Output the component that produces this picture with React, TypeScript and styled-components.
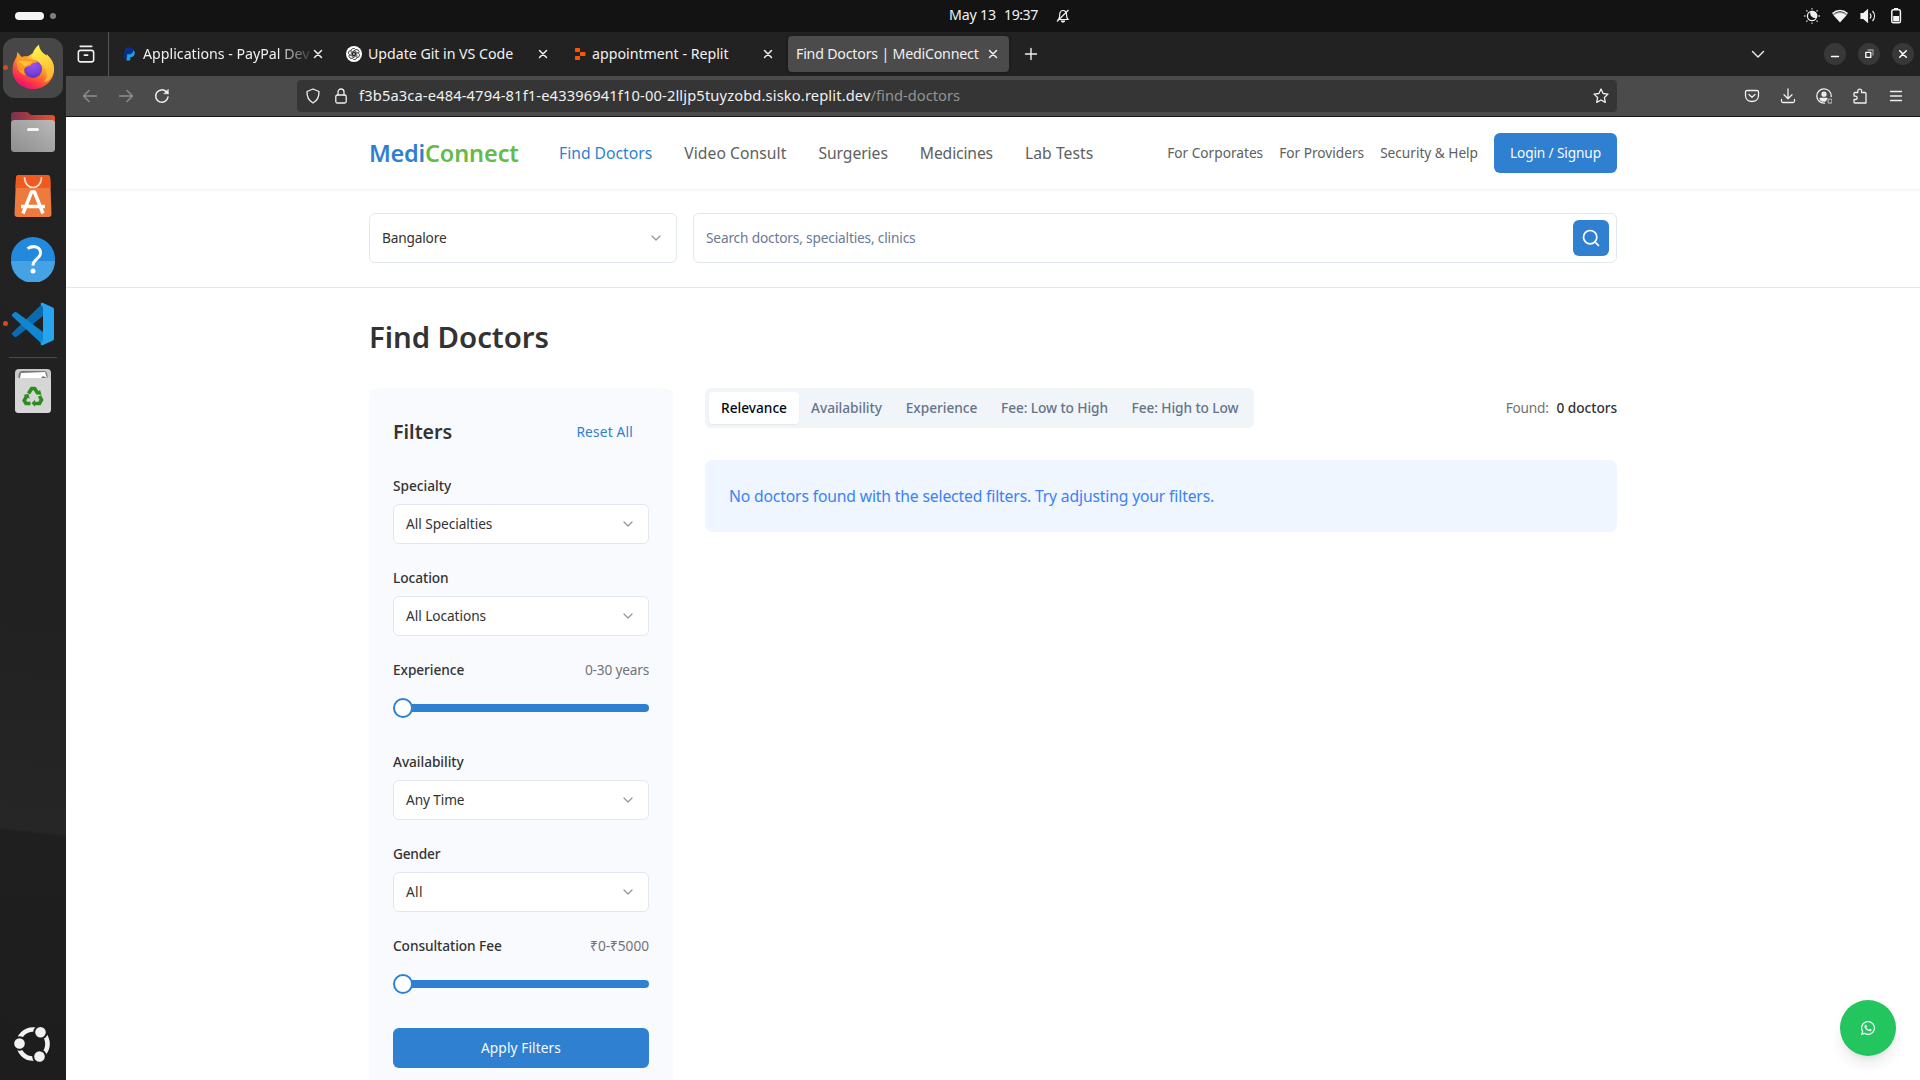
import React from 'react';
import styled, { createGlobalStyle } from 'styled-components';

const GlobalStyle = createGlobalStyle`
  * { box-sizing: border-box; }
  html, body { margin: 0; padding: 0; background: #fff; overflow: hidden; }
  body { font-family: "Noto Sans", "Open Sans", sans-serif; }
  button { font-family: inherit; border: 0; padding: 0; background: none; }
  svg { display: block; flex-shrink: 0; }
`;

/* ---------- text ---------- */

const Text = styled.span<{ $size?: number; $weight?: number; $ls?: number; $color?: string }>`
  font-size: ${p => p.$size ?? 13.7}px;
  font-weight: ${p => p.$weight ?? 400};
  letter-spacing: ${p => p.$ls ?? 0}px;
  color: ${p => p.$color ?? 'inherit'};
  line-height: 20px;
  white-space: pre;
`;

/* ---------- desktop shell ---------- */

const Desktop = styled.div`
  width: 1920px;
  height: 1080px;
  display: flex;
  flex-direction: column;
  overflow: hidden;
`;

const SystemBar = styled.header`
  height: 32px;
  flex-shrink: 0;
  display: grid;
  grid-template-columns: 949px 1fr auto;
  align-items: center;
  background: #131313;
  color: #f2f2f2;
`;

const Workspaces = styled.div`
  display: flex;
  align-items: center;
  gap: 6px;
  padding-left: 15px;
`;

const WorkspacePill = styled.i`
  width: 29px;
  height: 8px;
  border-radius: 4px;
  background: #f4f4f4;
`;

const WorkspaceDot = styled.i`
  width: 6px;
  height: 6px;
  border-radius: 50%;
  background: #808080;
`;

const Clock = styled.div`
  display: flex;
  align-items: center;
  padding-bottom: 4px;
`;

const ClockDay = styled.div`
  width: 55px;
`;

const ClockTime = styled.div`
  width: 52px;
`;

const BellBox = styled.div`
  padding-top: 4px;
`;

const SystemIcons = styled.div`
  display: flex;
  gap: 10px;
  padding-right: 15px;
`;

const Workspace = styled.div`
  flex: 1;
  display: flex;
  min-height: 0;
`;

const Dock = styled.nav`
  width: 66px;
  flex-shrink: 0;
  display: flex;
  flex-direction: column;
  align-items: center;
  padding-bottom: 16px;
  background: linear-gradient(187deg, #222 0%, #212121 55%, #262626 76%, #1f1f1f 76.3%, #1d1d1d 100%);
`;

const DockItem = styled.div<{ $active?: boolean; $lift?: boolean }>`
  position: relative;
  width: 60px;
  height: 60px;
  margin-top: ${p => (p.$active ? 6 : 4)}px;
  padding-bottom: ${p => (p.$lift ? 2 : 0)}px;
  display: flex;
  align-items: center;
  justify-content: center;
  border-radius: 12px;
  background: ${p => (p.$active ? '#474747' : 'transparent')};
`;

const RunningDot = styled.i`
  position: absolute;
  left: 0;
  top: 27px;
  width: 5px;
  height: 5px;
  border-radius: 50%;
  background: #d84b16;
`;

const DockDivider = styled.hr`
  width: 48px;
  height: 1px;
  border: 0;
  margin: 3px 0 0;
  background: #4c4c4c;
`;

const DockSpacer = styled.div`
  flex: 1;
`;

/* ---------- browser chrome ---------- */

const Browser = styled.div`
  flex: 1;
  display: flex;
  flex-direction: column;
  min-width: 0;
`;

const TabBar = styled.div`
  height: 44px;
  flex-shrink: 0;
  display: flex;
  align-items: center;
  background: #222;
  color: #f0f0f0;
`;

const TabOverview = styled.div`
  width: 43px;
  height: 44px;
  display: flex;
  align-items: center;
  padding-left: 11px;
  border-right: 1px solid #565656;
`;

const TabItem = styled.div<{ $width: number; $start: number; $end: number; $active?: boolean }>`
  width: ${p => p.$width}px;
  height: 36px;
  display: flex;
  align-items: center;
  justify-content: space-between;
  padding-left: ${p => p.$start}px;
  padding-right: ${p => p.$end}px;
  border-radius: 4px;
  background: ${p => (p.$active ? '#4b4b4b' : 'transparent')};
  box-shadow: ${p => (p.$active ? '0 0 3px rgba(0,0,0,.5)' : 'none')};
`;

const TabLabel = styled.div<{ $fade?: boolean }>`
  flex: 1;
  display: flex;
  align-items: center;
  gap: ${p => (p.$fade ? 8 : 6)}px;
  min-width: 0;
  overflow: hidden;
  mask-image: ${p => (p.$fade ? 'linear-gradient(to right, #000 155px, transparent 192px)' : 'none')};
`;

const NewTab = styled.div`
  width: 42px;
  display: flex;
  justify-content: center;
  padding-left: 1px;
`;

const TabBarEnd = styled.div`
  margin-left: auto;
  display: flex;
  align-items: center;
  gap: 12px;
  padding-right: 6px;
`;

const TabListChevron = styled.div`
  margin-right: 46px;
`;

const WindowButton = styled.button`
  width: 22px;
  height: 22px;
  display: flex;
  align-items: center;
  justify-content: center;
  border-radius: 50%;
  background: #383838;
`;

const Toolbar = styled.div`
  height: 41px;
  flex-shrink: 0;
  display: flex;
  align-items: center;
  background: #4b4b4b;
  border-bottom: 1px solid #161616;
  color: #f0f0f0;
`;

const NavButtons = styled.div`
  width: 231px;
  display: flex;
  gap: 20px;
  padding-left: 16px;
`;

const AddressBar = styled.div`
  width: 1320px;
  height: 32px;
  display: flex;
  align-items: center;
  padding: 0 8px;
  border-radius: 4px;
  background: #353535;
`;

const AddressIcons = styled.div`
  width: 54px;
  display: flex;
  gap: 12px;
`;

const AddressText = styled.div`
  display: flex;
  padding-bottom: 2px;
`;

const StarBox = styled.div`
  margin-left: auto;
`;

const ToolbarIcons = styled.div`
  margin-left: auto;
  display: flex;
  gap: 20px;
  padding-right: 16px;
`;

/* ---------- web page ---------- */

const Page = styled.main`
  flex: 1;
  min-height: 0;
  display: flex;
  flex-direction: column;
  background: #fff;
  color: #333;
`;

const SiteHeader = styled.div`
  height: 73px;
  flex-shrink: 0;
  border-bottom: 1px solid #f3f4f6;
  box-shadow: 0 1px 2px rgba(0, 0, 0, 0.03);
`;

const Container = styled.div`
  width: 1248px;
  height: 100%;
  margin: 0 auto;
  display: flex;
  align-items: center;
`;

const Logo = styled.div`
  width: 190px;
  display: flex;
  align-items: center;
`;

const MainNav = styled.nav`
  display: flex;
  gap: 32px;
`;

const AccountNav = styled.nav`
  margin-left: auto;
  display: flex;
  align-items: center;
  gap: 16px;
`;

const PrimaryButton = styled.button<{ $wide?: boolean }>`
  width: ${p => (p.$wide ? '100%' : '123px')};
  height: 40px;
  display: flex;
  align-items: center;
  justify-content: center;
  border-radius: 6px;
  background: #2f80d1;
  color: #f8fafc;
`;

const SearchBand = styled.section`
  height: 98px;
  flex-shrink: 0;
  border-bottom: 1px solid #e5e7eb;
`;

const SearchRow = styled(Container)`
  gap: 16px;
  padding-bottom: 1px;
`;

const Select = styled.div<{ $width?: number; $height: number }>`
  width: ${p => (p.$width ? `${p.$width}px` : '100%')};
  height: ${p => p.$height}px;
  display: flex;
  align-items: center;
  justify-content: space-between;
  padding: 0 12px;
  border: 1px solid #e2e8f0;
  border-radius: 6px;
  background: #fff;
  color: #333;
`;

const SearchInput = styled.div`
  flex: 1;
  height: 50px;
  display: flex;
  align-items: center;
  justify-content: space-between;
  padding: 0 7px 0 12px;
  border: 1px solid #e2e8f0;
  border-radius: 6px;
`;

const SearchButton = styled.button`
  width: 36px;
  height: 36px;
  display: flex;
  align-items: center;
  justify-content: center;
  border-radius: 6px;
  background: #2f80d1;
`;

const Content = styled.section`
  width: 1248px;
  margin: 0 auto;
  flex: 1;
  min-height: 0;
  display: flex;
  flex-direction: column;
`;

const Title = styled.h1`
  margin: 31px 0 33px;
  height: 36px;
  line-height: 36px;
  font-size: 29.4px;
  font-weight: 600;
  letter-spacing: -0.06px;
`;

const Columns = styled.div`
  flex: 1;
  min-height: 0;
  display: grid;
  grid-template-columns: 304px 1fr;
  gap: 32px;
`;

const FilterCard = styled.aside`
  display: flex;
  flex-direction: column;
  padding: 24px;
  border-radius: 8px 8px 0 0;
  background: #f8fafe;
`;

const FilterHead = styled.div`
  height: 40px;
  margin-bottom: 24px;
  display: flex;
  align-items: center;
  justify-content: space-between;
  padding-right: 16px;
`;

const Field = styled.div`
  height: 92px;
  display: flex;
  flex-direction: column;
  gap: 8px;
`;

const FieldHead = styled.div`
  height: 20px;
  display: flex;
  align-items: center;
  justify-content: space-between;
`;

const Slider = styled.div`
  height: 40px;
  display: flex;
  align-items: center;
`;

const SliderThumb = styled.i`
  width: 20px;
  height: 20px;
  flex-shrink: 0;
  border: 2px solid #2f80d1;
  border-radius: 50%;
  background: #fff;
`;

const SliderTrack = styled.i`
  flex: 1;
  height: 8px;
  margin-left: -1px;
  border-radius: 0 4px 4px 0;
  background: #2f80d1;
`;

const Results = styled.div`
  display: flex;
  flex-direction: column;
  gap: 32px;
`;

const ResultsHead = styled.div`
  height: 40px;
  display: flex;
  align-items: center;
  justify-content: space-between;
`;

const SortTabs = styled.div`
  height: 40px;
  display: flex;
  padding: 4px;
  border-radius: 6px;
  background: #f1f4f9;
`;

const SortTab = styled.button<{ $width: number; $active?: boolean }>`
  width: ${p => p.$width}px;
  height: 32px;
  display: flex;
  align-items: center;
  justify-content: center;
  border-radius: 4px;
  color: ${p => (p.$active ? '#020817' : '#64748b')};
  background: ${p => (p.$active ? '#fff' : 'transparent')};
  box-shadow: ${p => (p.$active ? '0 1px 2px rgba(0,0,0,.06)' : 'none')};
`;

const ResultCount = styled.div`
  display: flex;
  gap: 8px;
`;

const Notice = styled.div`
  height: 72px;
  display: flex;
  align-items: center;
  padding: 0 24px;
  border-radius: 8px;
  background: #eff6ff;
  color: #3b82f6;
`;

const ChatButton = styled.button`
  position: fixed;
  left: 1840px;
  top: 1000px;
  width: 56px;
  height: 56px;
  display: flex;
  align-items: center;
  justify-content: center;
  border-radius: 50%;
  background: #22c55e;
  box-shadow: 0 10px 15px -3px rgba(0, 0, 0, 0.1), 0 4px 6px -4px rgba(0, 0, 0, 0.1);
`;

/* ---------- icons ---------- */

type IconProps = { size?: number; sw?: number; color?: string; children: React.ReactNode };

const Icon = ({ size = 16, sw = 1.3, color = 'currentColor', children }: IconProps) => (
  <svg width={size} height={size} viewBox="0 0 16 16" fill="none" stroke={color} strokeWidth={sw} strokeLinecap="round" strokeLinejoin="round">
    {children}
  </svg>
);

const CloseIcon = () => <Icon sw={1.5}><path d="M4.500 4.500l7 7M11.500 4.500l-7 7" /></Icon>;

const ChevronDown = () => (
  <svg width="16" height="16" viewBox="0 0 24 24" fill="none" stroke="#999" strokeWidth="2" strokeLinecap="round" strokeLinejoin="round">
    <path d="m6 9 6 6 6-6" />
  </svg>
);

const FirefoxIcon = () => (
  <svg width="44" height="46" viewBox="0 0 44 46">
    <defs>
      <linearGradient id="ffBody" x1="0.8" y1="0.1" x2="0.25" y2="1">
        <stop offset="0" stopColor="#fff44f" />
        <stop offset="0.3" stopColor="#ffb52e" />
        <stop offset="0.55" stopColor="#ff6a33" />
        <stop offset="0.8" stopColor="#fb2c4f" />
        <stop offset="1" stopColor="#e2098a" />
      </linearGradient>
      <radialGradient id="ffGlobe" cx="0.5" cy="0.25" r="0.8">
        <stop offset="0" stopColor="#a04df5" />
        <stop offset="0.6" stopColor="#7a42dd" />
        <stop offset="1" stopColor="#4a3aa8" />
      </radialGradient>
      <linearGradient id="ffFlame" x1="0.5" y1="0" x2="0.7" y2="1">
        <stop offset="0" stopColor="#fff14e" />
        <stop offset="1" stopColor="#ffb02b" />
      </linearGradient>
    </defs>
    <path d="M1.500 26c0-6 2-10 4-13l1-5 4 5c2-1 4-1 6-.5L27 6l11 7c4 4 5 8 5 12.500C43 36 34 45 22.500 45S1.500 37 1.500 26z" fill="url(#ffBody)" />
    <path d="M20.500 15c.5-6 3-11 7.500-14.500 0 5 4 8 7 12 1-.8.900-1.500.7-2.500 8 8 9 17 4.300 23.500-2 3-5 4.500-7 4.500 4-5 3-11 1-14-2-4-7-6-13.500-9z" fill="url(#ffFlame)" />
    <circle cx="22" cy="25" r="9" fill="url(#ffGlobe)" />
    <path d="M7 9l3.500 4.500c3-.8 6 0 8 2 4-1 7 1 8 3-3 0-6 .5-7 3-2 1-5 1-6 3-1 3 0 5 1 7-5-2-8-5-8.500-10C5 17 6 12 7 9z" fill="#ff9a24" />
    <path d="M7 17.500c5-2 9 1 14 0-1 3-5 3-7 5-2-2-4-3-7-5z" fill="#ffc23a" />
  </svg>
);

const FilesIcon = () => (
  <svg width="46" height="42" viewBox="0 0 46 42">
    <defs>
      <linearGradient id="flBack" x1="0" x2="1"><stop offset="0" stopColor="#7a2f52" /><stop offset="1" stopColor="#e8532a" /></linearGradient>
      <linearGradient id="flFront" x1="0" y1="1" x2="1" y2="0"><stop offset="0" stopColor="#8e8e8e" /><stop offset="1" stopColor="#b9b9b9" /></linearGradient>
    </defs>
    <path d="M1 4c0-2 1-3 3-3h13c2 0 2 3 5 3h20c2 0 3 1 3 3v14H1z" fill="url(#flBack)" />
    <rect x="1" y="9" width="44" height="32" rx="3.500" fill="url(#flFront)" />
    <rect x="17" y="17" width="12" height="3" rx="1.500" fill="#f5f5f5" />
  </svg>
);

const SoftwareIcon = () => (
  <svg width="38" height="44" viewBox="0 0 38 44">
    <path d="M5 1h28c2 0 3 1 3.200 3L37.500 40c0 2-1 3-3 3h-31c-2 0-3-1-3-3L2 4c0-2 1-3 3-3z" fill="#ee7a3c" />
    <path d="M5 1h28c2 0 3 1 3.200 3l.5 10H1.500L2 4c0-2 1-3 3-3z" fill="#f05a20" />
    <path d="M10.500 3c0 14 17 14 17 0" fill="none" stroke="#fbe3d8" strokeWidth="1.600" />
    <path d="M9 39.500L17.500 18h3L29 39.500M7 32.500h24" fill="none" stroke="#fff" strokeWidth="3.500" strokeLinejoin="round" />
  </svg>
);

const HelpIcon = () => (
  <svg width="46" height="46" viewBox="0 0 46 46">
    <circle cx="23" cy="23" r="22" fill="#2389dc" />
    <path d="M1 25a22 22 0 0044 0z" fill="#45a2e4" />
    <path d="M17.500 12.500c7-4 13-1 13 4.500 0 6-7.500 6-7.500 12.500" fill="none" stroke="#fff" strokeWidth="3" />
    <circle cx="23" cy="35" r="2.500" fill="#fff" />
  </svg>
);

const CodeIcon = () => (
  <svg width="44" height="44" viewBox="0 0 44 44">
    <path d="M32 1v13L6 34.500c-1 .8-2 .7-2.500.2L1.500 33c-.8-.8-.8-1.800 0-2.500z" fill="#0a6bb0" />
    <path d="M32 43V30L6 10.500c-1-.8-2-.7-2.500-.2L1.500 12c-.8.8-.8 1.800 0 2.500z" fill="#1186d0" />
    <path d="M31.500.8L42 5.500c.7.4 1 1 1 1.800v29.400c0 .8-.3 1.400-1 1.800L31.500 43.200c-1 .3-2-.5-2-1.500l2.500-3.200V5.500L29.500 2.300c0-1 1-1.800 2-1.500z" fill="#27a4ee" />
  </svg>
);

const TrashIcon = () => (
  <svg width="38" height="46" viewBox="0 0 38 46">
    <rect x="1" y="1" width="36" height="44" rx="4" fill="#c9c9c9" />
    <rect x="1" y="9" width="36" height="36" rx="4" fill="#d6d6d6" />
    <path d="M4.500 10c0-5 1-7 4-7h21c3 0 4 2 4 7z" fill="#777" />
    <path d="M6 10l1-5 24-1 2 6-4-2-2 2z" fill="#fff" />
    <g fill="none" stroke="#2e8b1f" strokeWidth="3.600">
      <path d="M14.500 25.500l3.200-5h3l3 4.800" />
      <path d="M25.500 28l2 4-2 3.500h-5" />
      <path d="M16.500 35.500H12l-1.800-3 2.300-4.200" />
    </g>
    <path d="M22 26.500l5.500.3-1.500-5zM21 31.800v7l-3.500-3.500zM9.500 27l4.800-1.300 1.500 5z" fill="#2e8b1f" />
  </svg>
);

const UbuntuIcon = () => (
  <svg width="40" height="40" viewBox="0 0 40 40">
    <circle cx="20" cy="20" r="14.500" fill="none" stroke="#f2f2f2" strokeWidth="4.600" />
    <g fill="#f2f2f2" stroke="#1e1e1e" strokeWidth="2">
      <circle cx="6.500" cy="19.500" r="6.300" />
      <circle cx="27.500" cy="8.300" r="6.300" />
      <circle cx="26.500" cy="32.500" r="6.300" />
    </g>
  </svg>
);

const PayPalIcon = () => (
  <svg width="12" height="14" viewBox="0 0 12 14">
    <path d="M4 3h6c2 1 2 3 1.500 4.500C11 9.500 9.500 10 7.500 10L7 13.500H3.500z" fill="#1ea0e6" />
    <path d="M2.500.5h5C10 .5 10.800 2 10.300 4 9.800 6.500 8 7.300 5.500 7.300H4.300L3.500 11.500H.3z" fill="#0a2f8a" />
  </svg>
);

const ChatGptIcon = () => (
  <svg width="16" height="16" viewBox="0 0 16 16">
    <circle cx="8" cy="8" r="8" fill="#fff" />
    <g fill="none" stroke="#222" strokeWidth="0.800">
      <circle cx="8" cy="8" r="1.900" />
      {[0, 60, 120, 180, 240, 300].map(a => (
        <path key={a} transform={`rotate(${a} 8 8)`} d="M5.200 7.500V4.600a2.300 2.300 0 014.300-1.100M6 5.500l4 2.200" />
      ))}
    </g>
  </svg>
);

const ReplitIcon = () => (
  <svg width="12" height="14" viewBox="0 0 12 14" fill="#fd5402">
    <rect x="1" y="1" width="5" height="4" rx="0.700" />
    <rect x="6" y="5" width="5.500" height="4" rx="0.700" />
    <rect x="1" y="9" width="5" height="4" rx="0.700" />
  </svg>
);

const BellOffIcon = () => (
  <svg width="14" height="14" viewBox="0 0 14 14" fill="none" stroke="#f0f0f0" strokeWidth="1.200">
    <path d="M2.500 10.500h9.500c-1-1-1.500-2-1.500-5C10.500 3 9 1.500 7 1.500S3.800 3 3.700 5.500c0 2.500-.2 4-1.200 5z" />
    <path d="M1 12.500L12.500 1" />
    <path d="M5.500 12a1.600 1.600 0 003 0z" fill="#f0f0f0" />
  </svg>
);

const BrightnessIcon = () => (
  <svg width="18" height="18" viewBox="0 0 18 18" fill="none" stroke="#eee" strokeWidth="1.300">
    <circle cx="9" cy="9" r="4.600" />
    <path d="M8 4.500a4.600 4.600 0 015.500 5.800C10.500 11 7 9 8 4.500z" fill="#eee" />
    <path stroke="#bbb" d="M9 1v1.600M9 15.400V17M1 9h1.600M15.400 9H17M3.300 3.300l1.200 1.200M13.500 13.500l1.200 1.200M3.300 14.700l1.200-1.200M13.500 4.500l1.200-1.200" />
  </svg>
);

const WifiIcon = () => (
  <svg width="18" height="18" viewBox="0 0 18 18">
    <path d="M9 15.500L2 7.800c4-3.600 10-3.600 14 0z" fill="#f4f4f4" />
    <path d="M1.500 6.600C6 2.500 12 2.500 16.500 6.600" fill="none" stroke="#f4f4f4" strokeWidth="1.500" />
    <path d="M2.500 8.100c4-3.300 9-3.300 13 0" fill="none" stroke="#555" strokeWidth="0.600" />
  </svg>
);

const VolumeIcon = () => (
  <svg width="18" height="18" viewBox="0 0 18 18" fill="none" stroke="#eee" strokeWidth="1.200">
    <path d="M2 6.500h2.500L8.500 3v12l-4-3.500H2z" fill="#f4f4f4" />
    <path d="M11 6.500c1.200 1.500 1.200 3.500 0 5M13.500 4c2.700 3 2.700 7 0 10" />
  </svg>
);

const BatteryIcon = () => (
  <svg width="18" height="18" viewBox="0 0 18 18">
    <rect x="4.800" y="2.800" width="8.600" height="13" rx="1.600" fill="none" stroke="#f4f4f4" strokeWidth="1.500" />
    <rect x="7" y="1" width="4.200" height="2" fill="#f4f4f4" />
    <rect x="6.200" y="9" width="5.800" height="5.400" fill="#f4f4f4" />
  </svg>
);

const WhatsAppIcon = () => (
  <svg width="16" height="16" viewBox="0 0 448 512" fill="#fff">
    <path d="M380.900 97.100C339 55.100 283.200 32 223.900 32c-122.400 0-222 99.600-222 222 0 39.100 10.200 77.300 29.600 111L0 480l117.700-30.900c32.400 17.700 68.900 27 106.100 27h.1c122.300 0 224.100-99.600 224.100-222 0-59.300-25.200-115-67.100-157zm-157 341.600c-33.200 0-65.700-8.900-94-25.700l-6.700-4-69.800 18.300L72 359.200l-4.400-7c-18.500-29.400-28.200-63.300-28.200-98.200 0-101.700 82.800-184.500 184.600-184.500 49.300 0 95.600 19.200 130.400 54.100 34.800 34.900 56.200 81.200 56.100 130.500 0 101.800-84.900 184.600-186.600 184.600zm101.200-138.200c-5.500-2.800-32.800-16.200-37.900-18-5.100-1.900-8.800-2.800-12.500 2.800-3.700 5.600-14.300 18-17.600 21.800-3.200 3.700-6.500 4.200-12 1.400-32.600-16.300-54-29.100-75.500-66-5.700-9.800 5.700-9.100 16.300-30.300 1.800-3.700.9-6.900-.5-9.700-1.400-2.800-12.500-30.100-17.100-41.200-4.500-10.800-9.100-9.300-12.500-9.500-3.200-.2-6.900-.2-10.600-.2-3.700 0-9.700 1.400-14.800 6.900-5.100 5.600-19.400 19-19.400 46.300 0 27.300 19.900 53.700 22.600 57.400 2.800 3.700 39.100 59.700 94.800 83.800 35.200 15.200 49 16.500 66.600 13.900 10.700-1.600 32.800-13.400 37.400-26.400 4.600-13 4.600-24.100 3.200-26.400-1.300-2.500-5-3.900-10.500-6.600z" />
  </svg>
);

/* ---------- page pieces ---------- */

const NAV = [
  { label: 'Find Doctors', ls: 0, active: true },
  { label: 'Video Consult', ls: 0.05 },
  { label: 'Surgeries', ls: -0.07 },
  { label: 'Medicines', ls: -0.14 },
  { label: 'Lab Tests', ls: 0.05 },
];

const ACCOUNT_LINKS = [
  { label: 'For Corporates', ls: -0.01 },
  { label: 'For Providers', ls: -0.01 },
  { label: 'Security & Help', ls: -0.03 },
];

const SORTS = [
  { label: 'Relevance', width: 90, ls: -0.01, active: true },
  { label: 'Availability', width: 95, ls: -0.03 },
  { label: 'Experience', width: 95, ls: -0.05 },
  { label: 'Fee: Low to High', width: 131, ls: -0.09 },
  { label: 'Fee: High to Low', width: 130, ls: -0.09 },
];

const SelectField = ({ label, value, ls = 0, valueLs = 0 }: { label: string; value: string; ls?: number; valueLs?: number }) => (
  <Field>
    <FieldHead><Text $weight={500} $ls={ls}>{label}</Text></FieldHead>
    <Select $height={40}><Text $ls={valueLs}>{value}</Text><ChevronDown /></Select>
  </Field>
);

const RangeField = ({ label, range, ls = 0, rangeLs = 0 }: { label: string; range: string; ls?: number; rangeLs?: number }) => (
  <Field>
    <FieldHead>
      <Text $weight={500} $ls={ls}>{label}</Text>
      <Text $ls={rangeLs} $color="#737373">{range}</Text>
    </FieldHead>
    <Slider><SliderThumb /><SliderTrack /></Slider>
  </Field>
);

export default function App() {
  return (
    <Desktop>
      <GlobalStyle />
      <SystemBar>
        <Workspaces><WorkspacePill /><WorkspaceDot /></Workspaces>
        <Clock>
          <ClockDay><Text $size={14.2} $ls={-0.17}>May 13</Text></ClockDay>
          <ClockTime><Text $size={14.2} $ls={-0.47}>19:37</Text></ClockTime>
          <BellBox><BellOffIcon /></BellBox>
        </Clock>
        <SystemIcons><BrightnessIcon /><WifiIcon /><VolumeIcon /><BatteryIcon /></SystemIcons>
      </SystemBar>

      <Workspace>
        <Dock>
          <DockItem $active $lift><RunningDot /><FirefoxIcon /></DockItem>
          <DockItem><FilesIcon /></DockItem>
          <DockItem><SoftwareIcon /></DockItem>
          <DockItem $lift><HelpIcon /></DockItem>
          <DockItem><RunningDot /><CodeIcon /></DockItem>
          <DockDivider />
          <DockItem $lift><TrashIcon /></DockItem>
          <DockSpacer />
          <UbuntuIcon />
        </Dock>

        <Browser>
          <TabBar>
            <TabOverview>
              <Icon size={18} sw={1.400}>
                <rect x="1.200" y="4.800" width="13.600" height="10.200" rx="2" />
                <path d="M2.800 1.200h10.400M6.500 9h3" />
              </Icon>
            </TabOverview>
            <TabItem $width={222} $start={14} $end={5}>
              <TabLabel $fade><PayPalIcon /><Text $size={14.2}>Applications - PayPal Deve</Text></TabLabel>
              <CloseIcon />
            </TabItem>
            <TabItem $width={226} $start={15} $end={6}>
              <TabLabel><ChatGptIcon /><Text $size={14.2} $ls={-0.03}>Update Git in VS Code</Text></TabLabel>
              <CloseIcon />
            </TabItem>
            <TabItem $width={231} $start={17} $end={12}>
              <TabLabel><ReplitIcon /><Text $size={14.2}>appointment - Replit</Text></TabLabel>
              <CloseIcon />
            </TabItem>
            <TabItem $width={221} $start={8} $end={8} $active>
              <TabLabel><Text $size={14.2} $ls={-0.2}>Find Doctors | MediConnect</Text></TabLabel>
              <CloseIcon />
            </TabItem>
            <NewTab><Icon sw={1.400}><path d="M8 2.500v11M2.500 8h11" /></Icon></NewTab>
            <TabBarEnd>
              <TabListChevron><Icon sw={1.400}><path d="M2.500 5.500L8 11l5.500-5.500" /></Icon></TabListChevron>
              <WindowButton><Icon color="#fff"><path d="M4.500 10.500h7" /></Icon></WindowButton>
              <WindowButton>
                <Icon color="#fff"><path d="M4.800 6.300h5v5h-5z" /><path d="M7 4h5v5" stroke="#999" /></Icon>
              </WindowButton>
              <WindowButton><Icon color="#fff" sw={1.500}><path d="M4.700 4.700l6.600 6.600M11.300 4.700l-6.600 6.600" /></Icon></WindowButton>
            </TabBarEnd>
          </TabBar>

          <Toolbar>
            <NavButtons>
              <Icon color="#8e8e8e" sw={1.400}><path d="M14.500 8H1.700M7 2.500L1.500 8 7 13.500" /></Icon>
              <Icon color="#8e8e8e" sw={1.400}><path d="M1.500 8h12.800M9 2.500L14.500 8 9 13.500" /></Icon>
              <Icon sw={1.500}><path d="M14 9a6.200 6.200 0 11-1.800-5.400L14 5.200" /><path d="M14.300 1.500v4.300H10z" fill="currentColor" strokeWidth="0.500" /></Icon>
            </NavButtons>
            <AddressBar>
              <AddressIcons>
                <Icon><path d="M8 1L14 3.500c.2 5-1.500 9-6 11.500-4.500-2.500-6.200-6.500-6-11.500z" /></Icon>
                <Icon><rect x="2.800" y="7" width="10.400" height="8" rx="1.500" /><path d="M5 7V4a3 3 0 016 0v3" /></Icon>
              </AddressIcons>
              <AddressText>
                <Text $size={14.7} $ls={0.13}>f3b5a3ca-e484-4794-81f1-e43396941f10-00-2lljp5tuyzobd.sisko.replit.dev</Text>
                <Text $size={14.7} $color="#949494">/find-doctors</Text>
              </AddressText>
              <StarBox>
                <Icon><path d="M8 1l2.100 4.500 4.900.6-3.600 3.400.9 4.900L8 12l-4.300 2.400.9-4.900L1 6.100l4.900-.6z" /></Icon>
              </StarBox>
            </AddressBar>
            <ToolbarIcons>
              <Icon><path d="M3 2.500h10c1 0 1.500.5 1.500 1.500v3.500c0 4-3 6-6.500 6s-6.500-2-6.500-6V4c0-1 .5-1.500 1.500-1.500z" /><path d="M5 6.500l3 2.800 3-2.800" /></Icon>
              <Icon><path d="M8 .8v9.500M4 6.800l4 4 4-4M1.500 11.500V13c0 1 .5 1.500 1.500 1.500h10c1 0 1.500-.5 1.500-1.500v-1.500" /></Icon>
              <Icon><path d="M8.500 15.200A7.200 7.200 0 1115.200 8.500" /><circle cx="8" cy="6.200" r="2" fill="currentColor" /><path d="M4 10.500h7l-2 2.500H7c-1.500 0-2.500-1-3-2.500z" fill="currentColor" /><circle cx="14" cy="13.200" r="2" stroke="#aaa" /></Icon>
              <Icon><path d="M5.800 4.500V3a1.900 1.900 0 013.800 0v1.500h3.400c.7 0 1 .3 1 1V15H3c-.7 0-1-.3-1-1v-2.500h1.500a1.700 1.700 0 000-3.400H2V5.500c0-.7.300-1 1-1z" /></Icon>
              <Icon><path d="M2.500 3.500h11M2.500 8h11M2.500 12.500h11" /></Icon>
            </ToolbarIcons>
          </Toolbar>

          <Page>
            <SiteHeader>
              <Container>
                <Logo>
                  <Text $size={23.5} $weight={600} $ls={-0.26} $color="#2f80d1">Medi</Text>
                  <Text $size={23.5} $weight={600} $ls={-0.1} $color="#66bb46">Connect</Text>
                </Logo>
                <MainNav>
                  {NAV.map(n => (
                    <Text key={n.label} $size={15.7} $ls={n.ls} $color={n.active ? '#2f80d1' : '#606060'}>{n.label}</Text>
                  ))}
                </MainNav>
                <AccountNav>
                  {ACCOUNT_LINKS.map(n => (
                    <Text key={n.label} $ls={n.ls} $color="#606060">{n.label}</Text>
                  ))}
                  <PrimaryButton><Text $ls={-0.14}>Login / Signup</Text></PrimaryButton>
                </AccountNav>
              </Container>
            </SiteHeader>

            <SearchBand>
              <SearchRow>
                <Select $width={308} $height={50}><Text $ls={-0.18}>Bangalore</Text><ChevronDown /></Select>
                <SearchInput>
                  <Text $ls={-0.17} $color="#6b7a90">Search doctors, specialties, clinics</Text>
                  <SearchButton>
                    <svg width="20" height="20" viewBox="0 0 24 24" fill="none" stroke="#fff" strokeWidth="2" strokeLinecap="round">
                      <circle cx="11" cy="11" r="8" /><path d="m21 21-4.300-4.300" />
                    </svg>
                  </SearchButton>
                </SearchInput>
              </SearchRow>
            </SearchBand>

            <Content>
              <Title>Find Doctors</Title>
              <Columns>
                <FilterCard>
                  <FilterHead>
                    <Text $size={19.6} $weight={600}>Filters</Text>
                    <Text $ls={0.2} $color="#2f80d1">Reset All</Text>
                  </FilterHead>
                  <SelectField label="Specialty" value="All Specialties" valueLs={-0.05} />
                  <SelectField label="Location" ls={-0.06} value="All Locations" valueLs={-0.06} />
                  <RangeField label="Experience" ls={-0.07} range="0-30 years" rangeLs={-0.2} />
                  <SelectField label="Availability" ls={-0.05} value="Any Time" valueLs={-0.12} />
                  <SelectField label="Gender" ls={-0.22} value="All" valueLs={0.3} />
                  <RangeField label="Consultation Fee" ls={-0.08} range="₹0-₹5000" rangeLs={-0.04} />
                  <PrimaryButton $wide><Text $ls={0.1}>Apply Filters</Text></PrimaryButton>
                </FilterCard>

                <Results>
                  <ResultsHead>
                    <SortTabs>
                      {SORTS.map(s => (
                        <SortTab key={s.label} $width={s.width} $active={s.active}>
                          <Text $weight={500} $ls={s.ls}>{s.label}</Text>
                        </SortTab>
                      ))}
                    </SortTabs>
                    <ResultCount>
                      <Text $ls={-0.25} $color="#737373">Found:</Text>
                      <Text $weight={500} $ls={-0.07}>0 doctors</Text>
                    </ResultCount>
                  </ResultsHead>
                  <Notice>
                    <Text $size={15.7} $ls={-0.155}>No doctors found with the selected filters. Try adjusting your filters.</Text>
                  </Notice>
                </Results>
              </Columns>
            </Content>
          </Page>
        </Browser>
      </Workspace>
      <ChatButton><WhatsAppIcon /></ChatButton>
    </Desktop>
  );
}
